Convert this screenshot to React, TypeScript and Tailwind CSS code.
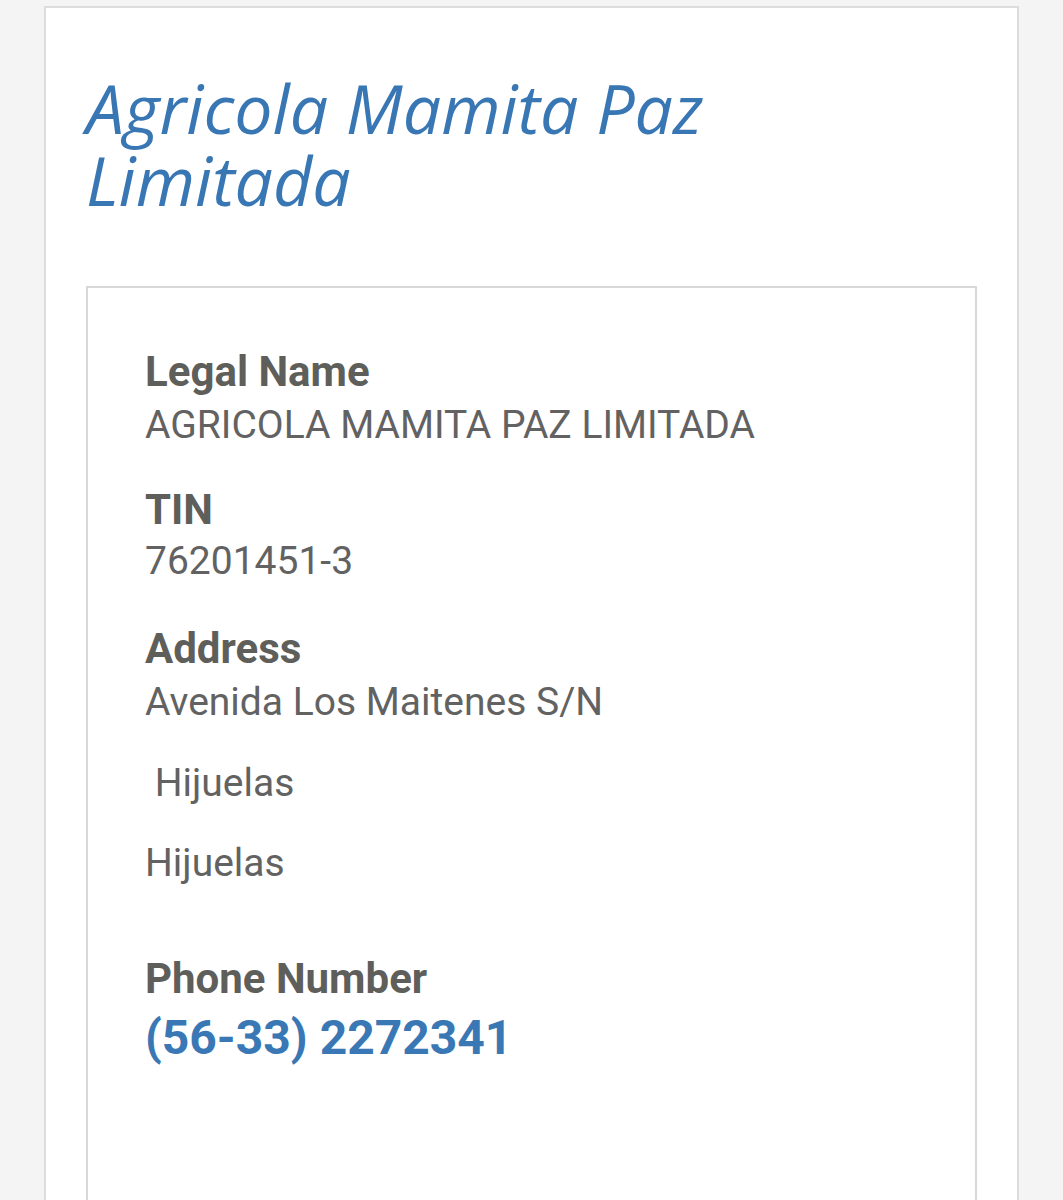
const Field = ({ label, className, children }: { label: string; className: string; children: React.ReactNode }) => (
  <div className={className}>
    <h3 className="text-[42px] leading-[52px] font-bold text-[#5e5e5b]">{label}</h3>
    {children}
  </div>
);

export default function App() {
  return (
    <div className="min-h-[1200px] bg-[#f4f4f4] pt-[6px] pl-[44px] pr-[44px] font-['Roboto',sans-serif]">
      <div className="w-[975px] min-h-[1194px] border-2 border-b-0 border-[#dcdcdc] bg-white px-[40px] pt-[64px]">
        <h1 className="text-[68px] leading-[72px] italic text-[#3877b3] font-['Open_Sans',sans-serif] pr-[260px]">
          Agricola Mamita Paz Limitada
        </h1>

        <div className="mt-[70px] border-2 border-b-0 border-[#d8d8d8] min-h-[920px] pl-[57px] pt-[58px]">
          <Field label="Legal Name" className="mb-[31px]">
            <p className="text-[39px] leading-[55px] text-[#626262]">AGRICOLA MAMITA PAZ LIMITADA</p>
          </Field>
          <Field label="TIN" className="mb-[37px]">
            <p className="text-[39px] leading-[50px] text-[#626262]">76201451-3</p>
          </Field>
          <Field label="Address" className="">
            <p className="text-[39px] leading-[54px] text-[#626262]">Avenida Los Maitenes S/N</p>
            <p className="text-[39px] leading-[52px] text-[#626262] mt-[28px]">&nbsp;Hijuelas</p>
            <p className="text-[39px] leading-[52px] text-[#626262] mt-[28px]">Hijuelas</p>
          </Field>
          <div className="mt-[64px]">
            <h3 className="text-[42px] leading-[52px] font-bold text-[#5e5e5b]">Phone Number</h3>
            <a href="#" className="block text-[48px] leading-[66px] font-bold text-[#3a78b5]">
              (56-33) 2272341
            </a>
          </div>
        </div>
      </div>
    </div>
  );
}
